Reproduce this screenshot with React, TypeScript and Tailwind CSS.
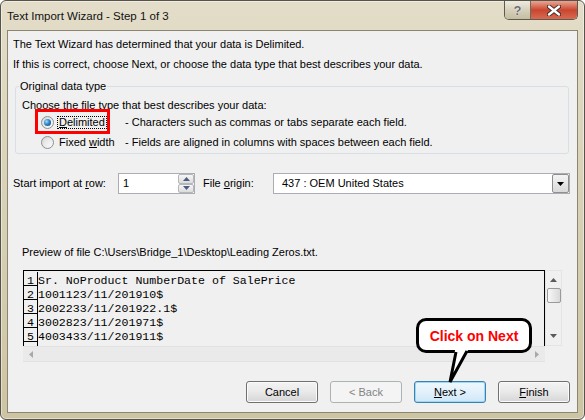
import React from "react";

const previewRows = [
  "Sr. NoProduct NumberDate of SalePrice",
  "1001123/11/201910$",
  "2002233/11/201922.1$",
  "3002823/11/201971$",
  "4003433/11/201911$",
];

const Radio: React.FC<{ checked?: boolean }> = ({ checked }) => (
  <span className="flex h-[13px] w-[13px] shrink-0 items-center justify-center rounded-full border border-[#8e8f8f] bg-gradient-to-br from-[#d6d6d6] to-[#fcfcfc]">
    {checked ? (
      <span className="h-[7px] w-[7px] rounded-full bg-[radial-gradient(circle_at_35%_35%,#a6dcf7_0%,#2f86cc_45%,#0c3c74_100%)]" />
    ) : (
      <span className="h-[7px] w-[7px] rounded-full bg-gradient-to-br from-[#e2e2e2] to-[#f8f8f8]" />
    )}
  </span>
);

const Arrow: React.FC<{ dir: "up" | "down" | "left" | "right"; color: string }> = ({ dir, color }) => {
  if (dir === "up")
    return (
      <svg width="7" height="4" viewBox="0 0 7 4">
        <path d="M0 4 L3.5 0 L7 4 Z" fill={color} />
      </svg>
    );
  if (dir === "down")
    return (
      <svg width="7" height="4" viewBox="0 0 7 4">
        <path d="M0 0 L3.5 4 L7 0 Z" fill={color} />
      </svg>
    );
  if (dir === "left")
    return (
      <svg width="4" height="7" viewBox="0 0 4 7">
        <path d="M4 0 L0 3.5 L4 7 Z" fill={color} />
      </svg>
    );
  return (
    <svg width="4" height="7" viewBox="0 0 4 7">
      <path d="M0 0 L4 3.5 L0 7 Z" fill={color} />
    </svg>
  );
};

const App: React.FC = () => {
  return (
    <div className="relative h-[420px] w-[585px] overflow-hidden bg-white font-['Liberation_Sans',Arial,sans-serif] text-[11px] leading-[13px] text-black">
      <div className="flex h-full flex-col rounded-[6px] border border-[#55534a] bg-gradient-to-b from-[#e3ddc9] to-[#cdc4a3] shadow-[inset_0_0_0_1px_rgba(255,255,255,0.45)]">
        {/* title bar */}
        <div className="flex h-[29px] items-start">
          <span className="ml-[6px] mt-[8px] text-[11.5px] leading-[14px] text-[#111]">Text Import Wizard - Step 1 of 3</span>
          <div className="ml-auto mr-[6px] flex h-[19px] overflow-hidden rounded-b-[5px] border border-t-0 border-[#5d5a4d]">
            <div className="flex w-[26px] items-center justify-center border-r border-[#6d6a5c] bg-gradient-to-b from-[#eeebe1] via-[#d6d0bc] to-[#c4bd9f]">
              <span className="text-[13px] font-bold leading-[13px] text-[#6a6a6a] [text-shadow:0_0_1px_#fff,0_0_1px_#fff]">?</span>
            </div>
            <div className="flex w-[46px] items-center justify-center bg-gradient-to-b from-[#e9a593] via-[#c9452e] to-[#d86a53]">
              <svg width="14" height="11" viewBox="0 0 14 11">
                <path d="M2 1.5 L12 9.5 M12 1.5 L2 9.5" stroke="#3d2a25" strokeWidth="4.2" strokeLinecap="round" />
                <path d="M2 1.5 L12 9.5 M12 1.5 L2 9.5" stroke="#ffffff" strokeWidth="2.4" strokeLinecap="round" />
              </svg>
            </div>
          </div>
        </div>

        {/* client area */}
        <div className="mx-[6px] mb-[6px] flex flex-1 flex-col border border-[#8a8672] bg-[#f0f0f0] px-[5px]">
          <p className="pt-[7px]">The Text Wizard has determined that your data is Delimited.</p>
          <p className="mt-[7px]">If this is correct, choose Next, or choose the data type that best describes your data.</p>

          <fieldset className="ml-[2px] mt-[9px] w-[554px] rounded-[3px] border border-[#d5dfe5] px-[6px] pb-[1px]">
            <legend className="ml-[-3px] px-[1px]">Original data type</legend>
            <p className="mt-[6px]">Choose the file type that best describes your data:</p>
            <div className="relative flex h-[20px] items-center">
              <div className="flex w-[103px] items-center">
                <span className="ml-[19px]">
                  <Radio checked />
                </span>
                <span className="ml-[3px] border border-dotted border-black px-[1px] leading-[11px]">
                  <u>D</u>elimited
                </span>
              </div>
              <span>- Characters such as commas or tabs separate each field.</span>
              <span className="absolute left-[13px] top-[-3px] h-[25px] w-[75px] border-[3px] border-[#ff0000]" />
            </div>
            <div className="flex h-[20px] items-center">
              <div className="flex w-[103px] items-center">
                <span className="ml-[19px]">
                  <Radio />
                </span>
                <span className="ml-[5px]">
                  Fixed <u>w</u>idth
                </span>
              </div>
              <span>- Fields are aligned in columns with spaces between each field.</span>
            </div>
          </fieldset>

          {/* start row / origin */}
          <div className="mt-[19px] flex items-center">
            <span className="w-[105px]">
              Start import at <u>r</u>ow:
            </span>
            <div className="flex h-[21px] w-[77px] border border-[#abadb3] bg-white">
              <span className="flex-1 pl-[4px] leading-[19px]">1</span>
              <div className="flex w-[16px] flex-col">
                <span className="flex flex-1 items-center justify-center rounded-[2px] border border-[#b3b6ba] bg-gradient-to-b from-[#f6f6f6] to-[#dcdcdc]">
                  <Arrow dir="up" color="#4a5d80" />
                </span>
                <span className="flex flex-1 items-center justify-center rounded-[2px] border border-[#b3b6ba] bg-gradient-to-b from-[#f6f6f6] to-[#dcdcdc]">
                  <Arrow dir="down" color="#4a5d80" />
                </span>
              </div>
            </div>
            <span className="ml-[8px] w-[70px]">
              File <u>o</u>rigin:
            </span>
            <div className="flex h-[21px] w-[297px] border border-[#abadb3] bg-white">
              <span className="flex-1 pl-[8px] leading-[19px]">437 : OEM United States</span>
              <span className="flex w-[17px] items-center justify-center rounded-[2px] border border-[#8f8f8f] bg-gradient-to-b from-[#f4f4f4] to-[#d9d9d9]">
                <Arrow dir="down" color="#000000" />
              </span>
            </div>
          </div>

          <p className="ml-[9px] mt-[52px]">Preview of file C:\Users\Bridge_1\Desktop\Leading Zeros.txt.</p>

          {/* preview */}
          <div className="ml-[10px] mt-[11px] grid h-[92px] w-[539px] grid-cols-[522px_17px] grid-rows-[76px_16px]">
            <div className="overflow-hidden border-l border-r border-t border-black pt-[1px] font-['Liberation_Mono','Courier_New',monospace] text-[11.6px]">
              {previewRows.map((row, i) => (
                <div key={i} className="flex h-[14px]">
                  <span className="w-[14px] shrink-0 border-b border-r border-black pt-[3px] text-center leading-[11px]">{i + 1}</span>
                  <span className="whitespace-pre pt-[3px] leading-[11px]">{row}</span>
                </div>
              ))}
              <div className="flex h-[14px]">
                <span className="w-[14px] shrink-0 border-r border-black" />
              </div>
            </div>
            <div className="flex flex-col items-center border border-[#e4e4e4] bg-[#f0f0f0]">
              <span className="mt-[7px] flex">
                <Arrow dir="up" color="#5a5a5a" />
              </span>
              <span className="mt-[6px] h-[15px] w-[14px] rounded-[2px] border border-[#9a9a9a] bg-gradient-to-r from-[#f7f7f7] to-[#d9d9d9]" />
              <span className="flex-1" />
              <span className="mb-[7px] flex">
                <Arrow dir="down" color="#5a5a5a" />
              </span>
            </div>
            <div className="flex items-center justify-between border-b border-t border-[#e2e2e2] bg-[#eaeaea] px-[6px]">
              <Arrow dir="left" color="#a8a8a8" />
              <Arrow dir="right" color="#a8a8a8" />
            </div>
            <div className="bg-[#f0f0f0]" />
          </div>

          {/* buttons */}
          <div className="mt-[19px] flex justify-end gap-[12px] pr-[2px]">
            <button className="h-[22px] w-[72px] rounded-[3px] border border-[#707070] bg-gradient-to-b from-[#f3f3f3] via-[#e9e9e9] to-[#d5d5d5] shadow-[inset_0_0_0_1px_#fbfbfb]">
              Cancel
            </button>
            <button className="h-[22px] w-[72px] rounded-[3px] border border-[#adb2b5] bg-[#f4f4f4] text-[#838383]">
              &lt; Back
            </button>
            <button className="h-[22px] w-[72px] rounded-[3px] border border-[#3c7fb1] bg-gradient-to-b from-[#eef7fd] via-[#e3f1fb] to-[#cfe7f8] shadow-[inset_0_0_0_1px_#9fd8f5]">
              <u>N</u>ext &gt;
            </button>
            <button className="h-[22px] w-[72px] rounded-[3px] border border-[#707070] bg-gradient-to-b from-[#f3f3f3] via-[#e9e9e9] to-[#d5d5d5] shadow-[inset_0_0_0_1px_#fbfbfb]">
              <u>F</u>inish
            </button>
          </div>
        </div>
      </div>

      {/* callout annotation */}
      <div className="absolute left-[416px] top-[318px] flex h-[35px] w-[116px] items-center justify-center rounded-[10px] border-[3px] border-black bg-white">
        <span className="text-[14px] font-bold leading-[16px] text-[#ff0000]">Click on Next</span>
      </div>
      <svg className="absolute left-[440px] top-[348px]" width="32" height="36" viewBox="0 0 32 36">
        <path d="M15 2 L28 2 L10 34 Z" fill="#ffffff" />
        <path d="M16 4 L10 34 L27 3" fill="none" stroke="#000000" strokeWidth="3" strokeLinejoin="miter" />
      </svg>
    </div>
  );
};

export default App;
